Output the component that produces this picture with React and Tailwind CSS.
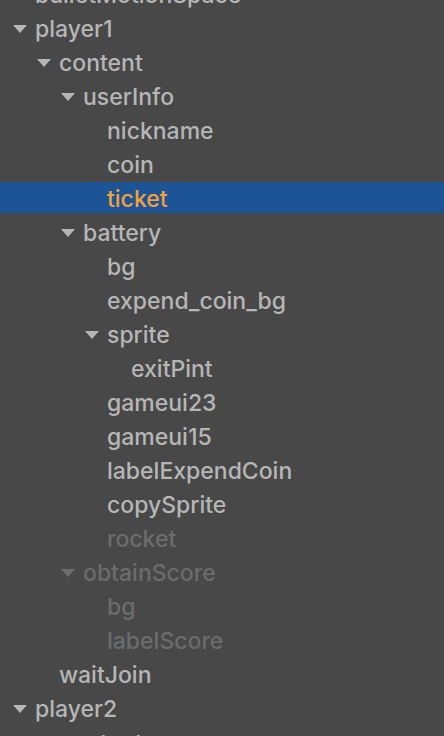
import React from "react";

// node tree as shown in the hierarchy panel
const rows = [
  { name: "bulletMotionSpace", level: 0 },
  { name: "player1", level: 0, open: true },
  { name: "content", level: 1, open: true },
  { name: "userInfo", level: 2, open: true },
  { name: "nickname", level: 3 },
  { name: "coin", level: 3 },
  { name: "ticket", level: 3, selected: true },
  { name: "battery", level: 2, open: true },
  { name: "bg", level: 3 },
  { name: "expend_coin_bg", level: 3 },
  { name: "sprite", level: 3, open: true },
  { name: "exitPint", level: 4 },
  { name: "gameui23", level: 3 },
  { name: "gameui15", level: 3 },
  { name: "labelExpendCoin", level: 3 },
  { name: "copySprite", level: 3 },
  { name: "rocket", level: 3, dim: true },
  { name: "obtainScore", level: 2, open: true, dim: true },
  { name: "bg", level: 3, dim: true },
  { name: "labelScore", level: 3, dim: true },
  { name: "waitJoin", level: 1 },
  { name: "player2", level: 0, open: true },
  { name: "content", level: 1, open: true },
];

const Arrow = ({ color }) => (
  <svg width="14" height="8" viewBox="0 0 14 8" className="shrink-0 mt-[3px]">
    <path d="M0 0 L14 0 L7 8 Z" fill={color} />
  </svg>
);

const Row = ({ row }) => {
  const textColor = row.selected
    ? "text-[#f3a23b]"
    : row.dim
    ? "text-[#6c6c6c]"
    : "text-[#b6b6b6]";
  const arrowColor = row.dim ? "#6c6c6c" : "#b6b6b6";
  const pad = row.open ? 13 + row.level * 24 : 35 + row.level * 24;

  return (
    <div className="h-[34px]">
      <div
        className={`h-[31px] flex items-center gap-2 ${
          row.selected ? "bg-[#1d5495]" : ""
        }`}
        style={{ paddingLeft: pad }}
      >
        {row.open && <Arrow color={arrowColor} />}
        <span
          className={`text-[23px] leading-none pt-[3px] font-medium whitespace-nowrap ${textColor}`}
        >
          {row.name}
        </span>
      </div>
    </div>
  );
};

export default function App() {
  return (
    <div
      className="w-[444px] h-[736px] overflow-hidden bg-[#484848]"
      style={{ fontFamily: "Inter, 'Noto Sans', sans-serif" }}
    >
      <div className="-mt-[22px] flex flex-col">
        {rows.map((row, i) => (
          <Row key={i} row={row} />
        ))}
      </div>
    </div>
  );
}
